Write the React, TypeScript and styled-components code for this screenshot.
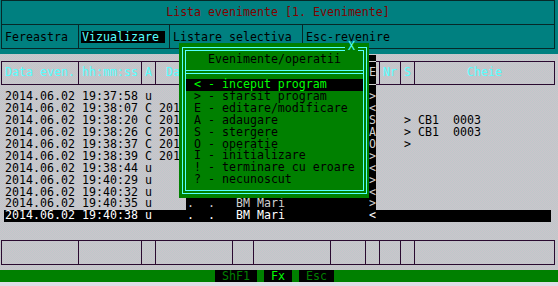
import styled, { createGlobalStyle, css } from "styled-components";

const CW = 7;
const RH = 11.92;

const TEAL = "#008080";
const GREEN = "#008000";
const CYAN = "#55ffff";
const TEAL_LINE = "#062828";
const GRID_LINE = "#2a0a30";
const SHADE_TEXT = "#cfcfcf";

const GlobalStyle = createGlobalStyle`
  html, body {
    margin: 0;
    padding: 0;
  }
  body {
    width: 558px;
    height: 286px;
    overflow: hidden;
    font-family: "DejaVu Sans Mono", "Liberation Mono", monospace;
    font-size: 11.627px;
  }
`;

const Screen = styled.div`
  position: relative;
  z-index: 0;
  width: 558px;
  height: 286px;
  overflow: hidden;
  display: flex;
  flex-direction: column;
  color: #000;
  background: repeating-conic-gradient(#cec2cb 0 25%, #bccaca 0 50%) 0 0 / 2px 2px;
`;

const TopPanel = styled.div`
  flex: none;
  height: 54px;
  padding-left: 1px;
  background: ${TEAL};
`;

const Frame = styled.div`
  width: 554px;
  box-sizing: border-box;
  border-left: 1px solid ${TEAL_LINE};
  border-right: 1px solid ${TEAL_LINE};
`;

const TitleBar = styled.div`
  height: 25px;
  box-sizing: border-box;
  border-top: 1px solid ${TEAL_LINE};
  border-bottom: 1px solid ${TEAL_LINE};
  line-height: 23px;
  text-align: center;
  white-space: pre;
  color: #800000;
`;

const MenuBar = styled.div`
  display: flex;
  height: 24px;
  box-sizing: border-box;
  border-bottom: 1px solid ${TEAL_LINE};
`;

const MenuCell = styled.div<{ $w?: number }>`
  flex: ${p => (p.$w ? "none" : "1")};
  width: ${p => (p.$w ? `${p.$w}px` : "auto")};
  box-sizing: border-box;
  display: flex;
  align-items: center;
  padding-left: 3px;
  border-right: ${p => (p.$w ? `1px solid ${TEAL_LINE}` : "none")};
`;

const MenuLabel = styled.span<{ $active?: boolean }>`
  height: 12px;
  line-height: 12px;
  white-space: pre;
  ${p =>
    p.$active &&
    css`
      margin-left: -1px;
      padding: 0 6px 0 1px;
      background: #000;
      color: ${CYAN};
    `}
`;

const GridBox = styled.div<{ $h: number; $top: number }>`
  flex: none;
  display: flex;
  width: 554px;
  height: ${p => p.$h}px;
  margin: ${p => p.$top}px 0 0 1px;
  box-sizing: border-box;
  border: 1px solid ${GRID_LINE};
`;

const shadeRule = `linear-gradient(${SHADE_TEXT}, ${SHADE_TEXT})`;

const GridCell = styled.div<{ $w: number; $shaded?: boolean }>`
  flex: none;
  width: ${p => p.$w}px;
  box-sizing: border-box;
  padding-left: 3px;
  border-right: 1px solid ${GRID_LINE};
  line-height: 20px;
  white-space: pre;
  color: ${CYAN};

  ${p =>
    p.$shaded &&
    css`
      margin: -1px 0;
      padding-top: 1px;
      color: ${SHADE_TEXT};
      background: ${shadeRule} 3px 0 / ${CW}px 1px no-repeat,
        ${shadeRule} 3px 100% / ${CW}px 1px no-repeat;
    `}

  &:last-child {
    flex: 1;
    border-right: none;
  }
`;

const Rows = styled.div`
  flex: none;
  width: 547px;
  margin: 6.3px 0 0 4px;
`;

const Row = styled.div<{ $selected?: boolean }>`
  display: flex;
  height: ${RH}px;
  line-height: ${RH}px;
  padding-left: 1px;
  background: ${p => (p.$selected ? "#000" : "transparent")};
  color: ${p => (p.$selected ? "#fff" : "#000")};
`;

const DataCell = styled.span<{ $cols: number; $shaded?: boolean }>`
  flex: none;
  width: ${p => p.$cols * CW}px;
  white-space: pre;
  ${p => p.$shaded && `color: ${SHADE_TEXT};`}
`;

const StatusBar = styled.div`
  flex: none;
  display: flex;
  gap: ${CW}px;
  height: 12px;
  margin-top: 5.5px;
  padding-left: 215px;
  background: ${GREEN};
`;

const Key = styled.span<{ $w: number; $bright?: boolean }>`
  width: ${p => p.$w}px;
  line-height: 12px;
  text-align: center;
  background: #000;
  color: ${p => (p.$bright ? "#00ff00" : GREEN)};
`;

const BottomStrip = styled.div`
  flex: 1;
  background: #dedee6;
`;

const Popup = styled.div`
  position: absolute;
  left: 179px;
  top: 43px;
  z-index: 1;
  width: 190px;
  height: 155px;
  box-sizing: border-box;
  padding: 4px 2px 4px 3px;
  background: ${GREEN};
`;

// drop shadow of the popup, painted under the table text
const PopupShadow = styled.div`
  position: absolute;
  left: 186px;
  top: 55px;
  z-index: -1;
  width: 190px;
  height: 155px;
  background: #000;
`;

const PopupOuter = styled.div`
  height: 100%;
  box-sizing: border-box;
  padding: 2px;
  border: 1px solid ${CYAN};
`;

const PopupInner = styled.div`
  display: flex;
  flex-direction: column;
  height: 100%;
  box-sizing: border-box;
  border: 1px solid ${CYAN};
`;

const CloseMark = styled.span`
  position: absolute;
  left: 166px;
  top: 0;
  width: 13px;
  height: 12px;
  line-height: 7px;
  text-align: center;
  background: ${GREEN};
  color: ${CYAN};
`;

const PopupTitle = styled.div`
  height: 19px;
  line-height: 17px;
  text-align: center;
`;

const DoubleRule = styled.div`
  height: 4px;
  box-sizing: border-box;
  border-top: 1px solid ${CYAN};
  border-bottom: 1px solid ${CYAN};
  margin-bottom: 5px;
`;

const Item = styled.div<{ $active?: boolean }>`
  height: ${RH}px;
  line-height: ${RH}px;
  padding-left: 8px;
  white-space: pre;
  background: ${p => (p.$active ? "#000" : "transparent")};
  color: ${p => (p.$active ? "#00ff00" : "#000")};
`;

// column separators of the table, in text columns
const SEPS = [0, 11, 20, 22, 33, 36, 47, 52, 54, 57, 59, 79];
const HEADS = ["Data even.", "hh:mm:ss", "A", " Data", "Cd", "Utilizator", "Prg", "E", "Nr", "S", "       Cheie"];
const SHADED_HEAD = 7;
const cellWidths = SEPS.slice(1).map((s, i) => CW * (s - SEPS[i]));

type Ev = {
  date: string;
  time: string;
  a: string;
  date2?: string;
  code?: string;
  user?: string;
  prg?: string;
  e: string;
  nr?: string;
  s?: string;
  key?: string;
};

// field widths in text columns, each with its trailing blank
const FIELDS: [keyof Ev, number][] = [
  ["date", 11],
  ["time", 9],
  ["a", 2],
  ["date2", 11],
  ["code", 3],
  ["user", 11],
  ["prg", 5],
  ["e", 2],
  ["nr", 3],
  ["s", 2],
  ["key", 19],
];

const EMPTY_DATE = "    .  .  ";

const EVENTS: Ev[] = [
  { date: "2014.06.02", time: "19:37:58", a: "u", e: ">" },
  { date: "2014.06.02", time: "19:38:07", a: "C", date2: "2014.06.02", e: "<" },
  { date: "2014.06.02", time: "19:38:20", a: "C", date2: "2014.06.02", e: "S", s: ">", key: "CB1  0003" },
  { date: "2014.06.02", time: "19:38:26", a: "C", date2: "2014.06.02", e: "A", s: ">", key: "CB1  0003" },
  { date: "2014.06.02", time: "19:38:37", a: "C", date2: "2014.06.02", e: "O", s: ">" },
  { date: "2014.06.02", time: "19:38:39", a: "C", date2: "2014.06.02", e: ">" },
  { date: "2014.06.02", time: "19:38:44", a: "u", e: "<" },
  { date: "2014.06.02", time: "19:40:29", a: "u", e: ">" },
  { date: "2014.06.02", time: "19:40:32", a: "u", e: "<" },
  { date: "2014.06.02", time: "19:40:35", a: "u", date2: EMPTY_DATE, code: "BM", user: "Mari", e: ">" },
  { date: "2014.06.02", time: "19:40:38", a: "u", date2: EMPTY_DATE, code: "BM", user: "Mari", e: "<" },
];

const OPS = [
  "< - inceput program",
  "> - sfarsit program",
  "E - editare/modificare",
  "A - adaugare",
  "S - stergere",
  "O - operatie",
  "I - initializare",
  "! - terminare cu eroare",
  "? - necunoscut",
];

const SELECTED = EVENTS.length - 1;
const SHADOW_ROW = 9;

// the shadow darkens the "E" column, and one row below the popup the fields from date2 to E
const isShaded = (row: number, field: keyof Ev) => {
  if (row < SHADOW_ROW) return field === "e";
  if (row === SHADOW_ROW) return ["date2", "code", "user", "prg", "e"].includes(field);
  return false;
};

function App() {
  return (
    <Screen>
      <GlobalStyle />
      <TopPanel>
        <Frame>
          <TitleBar>Lista evenimente [1. Evenimente]</TitleBar>
          <MenuBar>
            <MenuCell $w={77}>
              <MenuLabel>Fereastra</MenuLabel>
            </MenuCell>
            <MenuCell $w={91}>
              <MenuLabel $active>Vizualizare</MenuLabel>
            </MenuCell>
            <MenuCell $w={133}>
              <MenuLabel>Listare selectiva</MenuLabel>
            </MenuCell>
            <MenuCell>
              <MenuLabel>Esc-revenire</MenuLabel>
            </MenuCell>
          </MenuBar>
        </Frame>
      </TopPanel>

      <GridBox $h={24} $top={7}>
        {HEADS.map((h, i) => (
          <GridCell key={i} $w={cellWidths[i]} $shaded={i === SHADED_HEAD}>
            {h}
          </GridCell>
        ))}
      </GridBox>

      <Rows>
        {EVENTS.map((ev, i) => (
          <Row key={i} $selected={i === SELECTED}>
            {FIELDS.map(([f, cols]) => (
              <DataCell key={f} $cols={cols} $shaded={isShaded(i, f)}>
                {ev[f]}
              </DataCell>
            ))}
          </Row>
        ))}
      </Rows>

      <GridBox $h={25} $top={17.58}>
        {cellWidths.map((w, i) => (
          <GridCell key={i} $w={w} />
        ))}
      </GridBox>

      <StatusBar>
        <Key $w={42}>ShF1</Key>
        <Key $w={28} $bright>
          Fx
        </Key>
        <Key $w={35}>Esc</Key>
      </StatusBar>
      <BottomStrip />

      <PopupShadow />
      <Popup>
        <CloseMark>X</CloseMark>
        <PopupOuter>
          <PopupInner>
            <PopupTitle>Evenimente/operatii</PopupTitle>
            <DoubleRule />
            {OPS.map((op, i) => (
              <Item key={i} $active={i === 0}>
                {op}
              </Item>
            ))}
          </PopupInner>
        </PopupOuter>
      </Popup>
    </Screen>
  );
}

export default App;
